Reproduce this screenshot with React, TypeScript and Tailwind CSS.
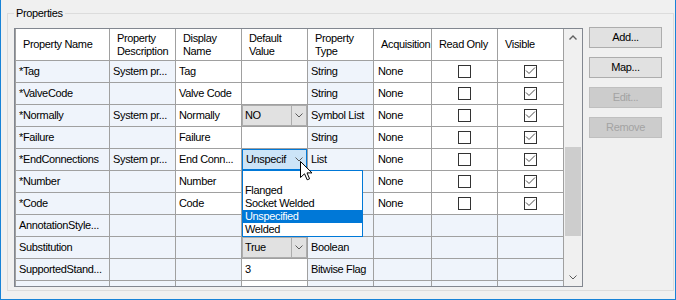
import React from "react";

type Def =
  | { kind: "text"; value: string }
  | { kind: "combo"; value: string }
  | { kind: "open"; value: string };

type Row = {
  name: string;
  desc: string;
  disp: string;
  def: Def;
  type: string;
  acq: string;
  ro: boolean | null;
  vis: boolean | null;
  locked: boolean;
};

const rows: Row[] = [
  { name: "*Tag", desc: "System pr...", disp: "Tag", def: { kind: "text", value: "" }, type: "String", acq: "None", ro: false, vis: true, locked: false },
  { name: "*ValveCode", desc: "", disp: "Valve Code", def: { kind: "text", value: "" }, type: "String", acq: "None", ro: false, vis: true, locked: false },
  { name: "*Normally", desc: "System pr...", disp: "Normally", def: { kind: "combo", value: "NO" }, type: "Symbol List", acq: "None", ro: false, vis: true, locked: false },
  { name: "*Failure", desc: "", disp: "Failure", def: { kind: "text", value: "" }, type: "String", acq: "None", ro: false, vis: true, locked: false },
  { name: "*EndConnections", desc: "System pr...", disp: "End Conn...", def: { kind: "open", value: "Unspecif" }, type: "List", acq: "None", ro: false, vis: true, locked: false },
  // type column of the next rows sits under the open list
  { name: "*Number", desc: "", disp: "Number", def: { kind: "text", value: "" }, type: "", acq: "None", ro: false, vis: true, locked: false },
  { name: "*Code", desc: "", disp: "Code", def: { kind: "text", value: "" }, type: "", acq: "None", ro: false, vis: true, locked: false },
  { name: "AnnotationStyle...", desc: "", disp: "", def: { kind: "text", value: "" }, type: "", acq: "", ro: null, vis: null, locked: true },
  { name: "Substitution", desc: "", disp: "", def: { kind: "combo", value: "True" }, type: "Boolean", acq: "", ro: null, vis: null, locked: true },
  { name: "SupportedStand...", desc: "", disp: "", def: { kind: "text", value: "3" }, type: "Bitwise Flag", acq: "", ro: null, vis: null, locked: true },
  { name: "", desc: "", disp: "", def: { kind: "text", value: "" }, type: "", acq: "", ro: null, vis: null, locked: true },
];

const options = ["", "Flanged", "Socket Welded", "Unspecified", "Welded"];

const LOCK = "bg-[#eff4fb]";
const OPEN = "bg-white";

function Chevron({ up = false }: { up?: boolean }) {
  return (
    <svg width="8" height="5" viewBox="0 0 8 5">
      <path d={up ? "M0.5 4.5 L4 1 L7.5 4.5" : "M0.5 0.5 L4 4 L7.5 0.5"} fill="none" stroke={up ? "#606060" : "#5a5a5a"} strokeWidth={up ? 1.4 : 1} />
    </svg>
  );
}

function Check({ on }: { on: boolean }) {
  return (
    <div className="w-[13px] h-[13px] border border-[#333333] bg-white">
      {on && (
        <svg width="11" height="11" viewBox="0 0 11 11">
          <path d="M1 4.5 L4 7.5 L10 1.5" fill="none" stroke="#4d4d4d" strokeWidth="1" />
        </svg>
      )}
    </div>
  );
}

function Cell({ bg, children, center = false }: { bg: string; children?: React.ReactNode; center?: boolean }) {
  return (
    <div
      className={`h-full border-r border-b border-[#a0a0a0] flex items-center overflow-hidden whitespace-nowrap ${
        center ? "justify-center" : "pl-[3px]"
      } ${bg}`}
    >
      {children}
    </div>
  );
}

function DefaultCell({ def }: { def: Def }) {
  if (def.kind === "combo") {
    return (
      <div className="h-full border-r border-b border-[#a0a0a0]">
        <div className="h-full flex border border-[#adadad] bg-[#e1e1e1]">
          <div className="flex-1 flex items-center pl-[2px]">{def.value}</div>
          <div className="w-[15px] border-l border-[#adadad] flex items-center justify-center">
            <Chevron />
          </div>
        </div>
      </div>
    );
  }
  if (def.kind === "open") {
    return (
      <div className="relative z-10 h-full border-r border-b border-[#a0a0a0]">
        <div className="h-full flex border border-[#0078d7] bg-[#cce4f7]">
          <div className="flex-1 flex items-center pl-[3px] overflow-hidden whitespace-nowrap">{def.value}</div>
          <div className="w-[15px] flex items-center justify-center">
            <Chevron />
          </div>
        </div>
        {/* dropdown list */}
        <div className="absolute left-0 top-[21px] w-[121px] h-[67px] border border-[#0078d7] bg-white">
          {options.map((o) => (
            <div
              key={o || "blank"}
              className={`h-[13px] leading-[13px] pl-[2px] ${o === "Unspecified" ? "bg-[#0078d7] text-white" : ""}`}
            >
              {o}
            </div>
          ))}
        </div>
        {/* mouse pointer */}
        <svg className="absolute left-[58px] top-[12px]" width="13" height="20" viewBox="0 0 13 20">
          <path d="M0.5 0.5 L0.5 16.5 L4.5 12.8 L7.2 18.8 L9.6 17.8 L7 11.9 L12 11.9 Z" fill="white" stroke="black" strokeWidth="1" strokeLinejoin="miter" />
        </svg>
      </div>
    );
  }
  return <Cell bg={OPEN}>{def.value}</Cell>;
}

function HeadCell({ children }: { children: React.ReactNode }) {
  return (
    <div className="h-full border-r border-b border-[#a0a0a0] bg-white flex items-center pl-[7px] leading-[13px] overflow-hidden whitespace-nowrap">
      <div>{children}</div>
    </div>
  );
}

function Button({ label, disabled = false }: { label: string; disabled?: boolean }) {
  return (
    <div
      className={`h-[21px] w-[73px] border flex items-center justify-center ${
        disabled ? "bg-[#cccccc] border-[#bfbfbf] text-[#a3a3a3]" : "bg-[#e1e1e1] border-[#adadad] text-black"
      }`}
    >
      {label}
    </div>
  );
}

export default function App() {
  return (
    <div className="w-[676px] h-[300px] bg-[#f0f0f0] border-l border-r border-b border-[#1883d7] pl-[6px] pt-[6px] font-['Liberation_Sans',Arial,sans-serif] text-[11px] tracking-[-0.35px] text-black">
      <fieldset className="w-[667px] h-[285px] border border-[#dcdcdc] pl-[6px] pt-[7px]">
        <legend className="px-[2px] leading-[14px]">Properties</legend>

        <div className="flex items-start">
          {/* ── grid ── */}
          <div className="mt-px w-[569px] h-[259px] border border-[#828790] flex">
            <div className="w-[549px] h-[257px] border-l border-[#a0a0a0] overflow-hidden">
              <div className="grid grid-cols-[94px_66px_66px_66px_66px_58px_66px_66px] h-[32px]">
                <HeadCell>Property Name</HeadCell>
                <HeadCell>
                  Property
                  <br />
                  Description
                </HeadCell>
                <HeadCell>
                  Display
                  <br />
                  Name
                </HeadCell>
                <HeadCell>
                  Default
                  <br />
                  Value
                </HeadCell>
                <HeadCell>
                  Property
                  <br />
                  Type
                </HeadCell>
                <HeadCell>Acquisition</HeadCell>
                <HeadCell>Read Only</HeadCell>
                <HeadCell>Visible</HeadCell>
              </div>

              {rows.map((r, i) => (
                <div key={i} className="grid grid-cols-[94px_66px_66px_66px_66px_58px_66px_66px] h-[22px]">
                  <Cell bg={LOCK}>{r.name}</Cell>
                  <Cell bg={LOCK}>{r.desc}</Cell>
                  <Cell bg={r.locked ? LOCK : OPEN}>{r.disp}</Cell>
                  <DefaultCell def={r.def} />
                  <Cell bg={LOCK}>{r.type}</Cell>
                  <Cell bg={r.locked ? LOCK : OPEN}>
                    <span className="pl-px">{r.acq}</span>
                  </Cell>
                  <Cell bg={r.locked ? LOCK : OPEN} center>
                    {r.ro !== null && <Check on={r.ro} />}
                  </Cell>
                  <Cell bg={r.locked ? LOCK : OPEN} center>
                    {r.vis !== null && <Check on={r.vis} />}
                  </Cell>
                </div>
              ))}
            </div>

            {/* scrollbar */}
            <div className="w-[18px] h-[257px] bg-[#f0f0f0] flex flex-col">
              <div className="h-[17px] flex items-center justify-center">
                <Chevron up />
              </div>
              <div className="flex-1">
                <div className="mt-[101px] mx-px h-[89px] bg-[#cdcdcd]" />
              </div>
              <div className="h-[17px] flex items-center justify-center">
                <Chevron />
              </div>
            </div>
          </div>

          {/* ── buttons ── */}
          <div className="ml-[6px] flex flex-col gap-[9px]">
            <Button label="Add..." />
            <Button label="Map..." />
            <Button label="Edit..." disabled />
            <Button label="Remove" disabled />
          </div>
        </div>
      </fieldset>
    </div>
  );
}
